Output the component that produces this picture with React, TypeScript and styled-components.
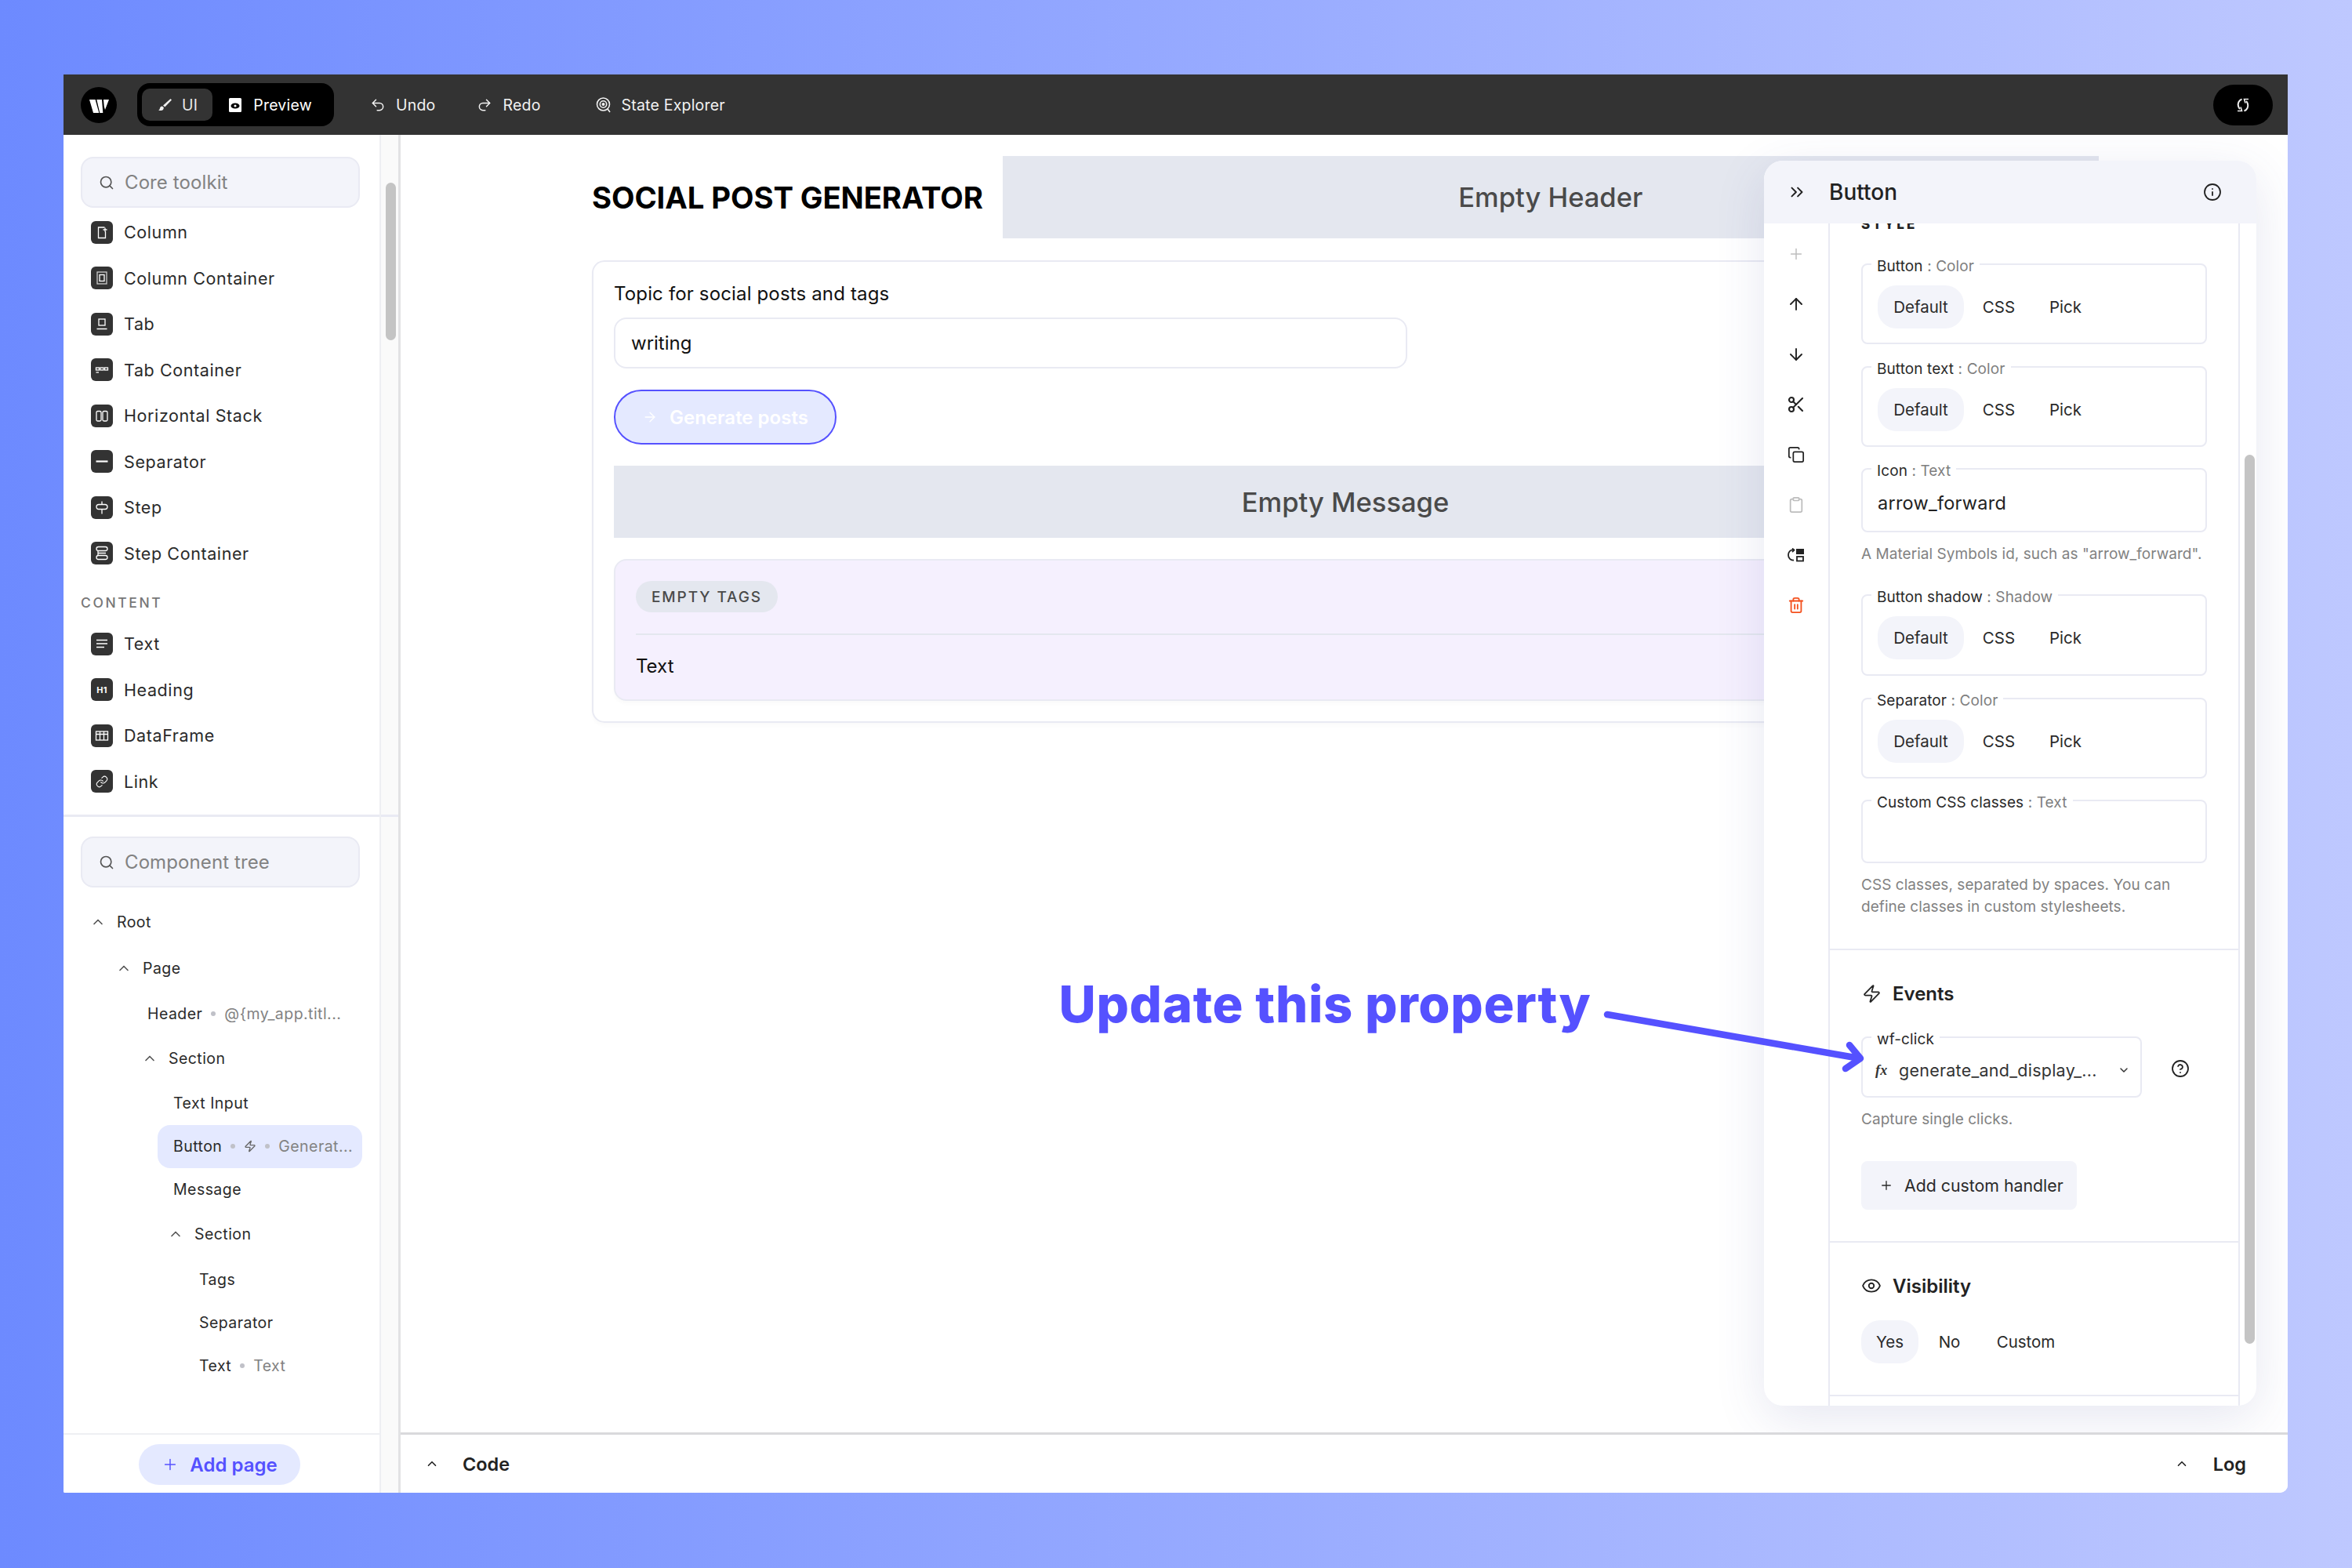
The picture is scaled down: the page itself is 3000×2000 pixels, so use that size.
import React from "react";
import styled, { createGlobalStyle } from "styled-components";
import {
  ArrowDown, ArrowRight, ArrowUp, ChevronDown, ChevronUp, ChevronsRight, CircleHelp, Clipboard, Copy,
  Eye, Info, Link, Plus, Redo2, Scissors, Search, Trash2, Undo2, Zap,
} from "lucide-react";

const FONT = `Inter, "Liberation Sans", sans-serif`;

const Global = createGlobalStyle`
  html, body { margin: 0; padding: 0; width: 3000px; height: 2000px; overflow: hidden; }
  body { font-family: ${FONT}; color: #222; background: linear-gradient(90deg, #6d8aff 0%, #bec8ff 100%); }
  * { box-sizing: border-box; }
`;

const Stage = styled.div`
  width: 3000px; height: 2000px; padding: 95px 82px 96px 81px;
`;
const Window = styled.div`
  width: 100%; height: 100%; display: flex; flex-direction: column; background: #fff;
  border-radius: 0 0 10px 2px; overflow: hidden;
`;

/* toolbar */
const Toolbar = styled.header`
  flex: 0 0 77px; background: #333; display: flex; align-items: center; padding: 0 19px 0 22px; color: #fff;
  font-size: 19.5px; letter-spacing: .2px;
`;
const Logo = styled.svg` width: 46px; height: 46px; flex: none; `;
const ModeSwitch = styled.div`
  margin-left: 26px; width: 251px; height: 55px; background: #000; border-radius: 16px; padding: 7px 6px;
  display: flex; align-items: center;
`;
const ModeBtn = styled.div<{ $on?: boolean }>`
  height: 41px; width: ${p => (p.$on ? 91 : 150)}px; border-radius: 10px; background: ${p => (p.$on ? "#333" : "transparent")};
  display: flex; align-items: center; gap: ${p => (p.$on ? 12 : 14)}px; padding-left: ${p => (p.$on ? 19 : 20)}px;
  color: ${p => (p.$on ? "#e8e8e8" : "#fff")};
`;
const ToolItem = styled.div<{ $ml: number }>`
  margin-left: ${p => p.$ml}px; display: flex; align-items: center; gap: 13px; color: #f2f2f2;
`;
const Grow = styled.div` flex: 1; `;
const SyncBtn = styled.div`
  width: 76px; height: 52px; border-radius: 26px; background: #000; display: flex; align-items: center; justify-content: center;
`;

/* body */
const Body = styled.div` flex: 1; display: flex; min-height: 0; `;
const Side = styled.aside`
  flex: 0 0 405px; width: 405px; min-width: 0; display: flex; flex-direction: column; background: #fff; border-right: 2px solid #eeeff3;
`;
const Rail = styled.div`
  flex: 0 0 25px; background: #fafafa; border-right: 3px solid #e2e2e4; padding: 61px 3px 0 6px;
`;
const RailThumb = styled.div` width: 13px; height: 201px; border-radius: 7px; background: #c4c4c4; `;
const RailRule = styled.div` margin: 605px -3px 0 -6px; height: 3px; background: #e9eaf3; `;
const Toolkit = styled.div`
  flex: 0 0 870px; padding: 28px 0 0 22px; border-bottom: 3px solid #e9eaf3;
`;
const SearchBox = styled.div`
  width: 356px; height: 65px; border-radius: 16px; background: #f3f4fa; border: 2.5px solid #e9eaf3;
  display: flex; align-items: center; gap: 13px; padding-left: 21px; color: #828282; font-size: 24px;
  letter-spacing: .1px;
`;
const ItemList = styled.div` margin-top: 2px; `;
const Item = styled.div`
  height: 58.5px; display: flex; align-items: center; gap: 14px; padding-left: 13px; font-size: 21.5px; color: #2a2a2a; letter-spacing: .6px;
`;
const Tile = styled.span`
  width: 28px; height: 29px; flex: none; border-radius: 6px; background: #333; display: inline-flex; align-items: center;
  justify-content: center; color: #fff; font-size: 11px; font-weight: 700; letter-spacing: .3px;
`;
const GroupLabel = styled.div`
  margin-top: 11px; height: 46px; line-height: 46px; font-size: 17.5px; font-weight: 500; letter-spacing: 2.6px; color: #777;
`;
const Tree = styled.div` flex: 1; padding: 25px 0 0 22px; display: flex; flex-direction: column; min-height: 0; `;
const TreeRows = styled.div` margin: 14px 0 0 -22px; width: 381px; `;
const Branch = styled.div<{ $level: number }>`
  height: 59.5px; display: flex; align-items: center; gap: 14px; font-size: 19.5px; color: #2a2a2a; letter-spacing: .45px;
  margin-left: ${p => 34 + p.$level * 33}px;
`;
const Leaf = styled.div<{ $level: number; $active?: boolean }>`
  height: 55px; display: flex; align-items: center; gap: 9px; font-size: 19.5px; color: #2a2a2a; letter-spacing: .45px;
  margin-left: ${p => 21 + p.$level * 33}px; padding-left: 20px; border-radius: 16px; white-space: nowrap; overflow: hidden;
  background: ${p => (p.$active ? "#e4e9ff" : "transparent")};
`;
const Dot = styled.i` width: 6px; height: 6px; border-radius: 50%; background: #c0c1c8; flex: none; margin: 0 2px; `;
const Secondary = styled.span` color: #828282; `;
const AddBar = styled.div`
  flex: 0 0 76px; border-top: 2px solid #eeeff3; display: flex; justify-content: center; padding: 12px 5px 0 0;
`;
const AddPage = styled.div`
  width: 206px; height: 52px; border-radius: 26px; background: #e4e9ff; color: #5551ff; font-weight: 600; font-size: 24px;
  display: flex; align-items: center; justify-content: center; gap: 14px;
`;

/* canvas */
const Main = styled.main` flex: 1; display: flex; flex-direction: column; min-width: 0; `;
const Canvas = styled.div` flex: 1; position: relative; overflow: hidden; padding: 27px 241px 0 244px; min-height: 0; `;
const HeaderRow = styled.div` display: flex; height: 105px; `;
const Title = styled.h1`
  margin: 0; flex: 0 0 523.5px; font-size: 38.3px; font-weight: 700; color: #000; display: flex; align-items: center; white-space: nowrap; letter-spacing: -.1px;
`;
const EmptyBlock = styled.div<{ $h: number }>`
  height: ${p => p.$h}px; flex: 1; background: #e4e7ef; color: #4a4a4a; display: flex; align-items: center; justify-content: center; font-size: 34.5px; font-weight: 500;
`;
const Card = styled.section`
  margin-top: 28px; height: 590px; border: 2px solid #e9eaf3; border-radius: 16px; padding: 27px 26px 0 26px; box-shadow: 0 4px 4px rgba(0,0,0,.02);
`;
const FieldLabel = styled.div` height: 28px; line-height: 28px; font-size: 24px; color: #111; letter-spacing: .15px; `;
const TextBox = styled.div`
  margin-top: 16px; width: 1012px; height: 65px; border: 2px solid #e9eaf3; border-radius: 16px; padding-left: 20px; display: flex; align-items: center;
  font-size: 24px; color: #111;
`;
const GenBtn = styled.div`
  margin-top: 27px; width: 284px; height: 70px; border-radius: 35px; border: 2px solid #5551ff; background: #e4e9ff; color: #fff; font-size: 24px; font-weight: 600;
  display: flex; align-items: center; gap: 15px; padding-left: 34px;
`;
const MessageWrap = styled.div` margin-top: 27px; display: flex; `;
const Purple = styled.div`
  margin-top: 27px; height: 181px; background: #f5f0fe; border: 2px solid #e9eaf3; border-radius: 16px; padding: 26px 26px 0; box-shadow: 0 4px 4px rgba(0,0,0,.02);
`;
const Tag = styled.div`
  display: inline-flex; align-items: center; height: 40px; width: 181px; justify-content: center; border-radius: 20px; background: #e4e7ef; color: #4a4a4a;
  font-size: 19px; font-weight: 500; letter-spacing: 1.9px; white-space: nowrap;
`;
const Rule = styled.div` margin-top: 27px; height: 2px; background: #e4e7ef; `;
const PurpleText = styled.div` margin-top: 26px; font-size: 24px; color: #111; line-height: 28px; `;

/* annotation */
const Callout = styled.div`
  position: absolute; left: 839.5px; top: 1070px; font-size: 65px; line-height: 78px; font-weight: 800; color: #5551ff; white-space: nowrap; letter-spacing: .7px; z-index: 5;
`;
const CalloutArrow = styled.svg` position: absolute; left: 1530px; top: 1115px; width: 340px; height: 80px; z-index: 5; overflow: visible; `;

/* props panel */
const Panel = styled.aside`
  position: absolute; left: 1739px; top: 33px; width: 628px; height: 1588px; border-radius: 24px; background: #fff; overflow: hidden;
  display: flex; flex-direction: column; box-shadow: 0 16px 64px rgba(60, 70, 150, .13); z-index: 3;
`;
const PanelHead = styled.div`
  flex: 0 0 80px; background: #f3f4fa; display: flex; align-items: center; padding: 0 44px 0 29px; gap: 28px; z-index: 1;
`;
const PanelTitle = styled.div` font-size: 28px; font-weight: 500; color: #222; flex: 1; `;
const PanelBody = styled.div` flex: 1; display: flex; min-height: 0; `;
const Tools = styled.div`
  flex: 0 0 84px; display: flex; flex-direction: column; align-items: center; padding: 7px 0 0 0; border-right: 2px solid #e9eaf3;
`;
const ToolBtn = styled.div<{ $color?: string }>`
  width: 40px; height: 64px; flex: none; display: flex; align-items: center; justify-content: center; color: ${p => p.$color || "#222"};
`;
const PanelMain = styled.div` flex: 0 0 523px; border-right: 2px solid #e9eaf3; overflow: hidden; `;
const PanelRail = styled.div` flex: 1; padding: 295px 4px 0 6px; `;
const PanelThumb = styled.div` width: 13px; height: 1134px; border-radius: 7px; background: #c4c4c4; `;
const Group = styled.section<{ $pt?: number; $pb: number }>`
  padding: ${p => p.$pt ?? 0}px 40px ${p => p.$pb}px 40px; border-bottom: 2px solid #e9eaf3;
`;
const StyleHead = styled.div` margin-top: -9px; height: 20px; line-height: 20px; font-size: 17px; font-weight: 800; letter-spacing: 3.2px; color: #222; `;
const Fld = styled.div<{ $mt: number; $h: number; $w?: number }>`
  position: relative; margin-top: ${p => p.$mt}px; height: ${p => p.$h}px; width: ${p => p.$w ?? 441}px; border: 2px solid #e9eaf3; border-radius: 8px;
`;
const Legend = styled.div`
  position: absolute; top: -10px; left: 11px; padding: 0 7px; height: 24px; line-height: 24px; background: #fff; font-size: 19px; color: #2a2a2a; white-space: nowrap; letter-spacing: .1px;
`;
const LegendType = styled.span` color: #7f7f7f; `;
const Pills = styled.div<{ $mt?: number; $ml?: number }>`
  display: flex; align-items: center; height: 55px; margin: ${p => p.$mt ?? 0}px 0 0 ${p => p.$ml ?? 0}px; font-size: 20.5px; color: #2a2a2a;
`;
const Pill = styled.div<{ $on?: boolean; $w: number }>`
  width: ${p => p.$w}px; height: 55px; border-radius: 24px; background: ${p => (p.$on ? "#f3f4fa" : "transparent")};
  display: flex; align-items: center; justify-content: center;
`;
const PlainValue = styled.div` padding: 6px 0 0 19px; height: 100%; display: flex; align-items: center; font-size: 23.5px; color: #222; letter-spacing: .25px; `;
const Help = styled.div<{ $mt: number }>` margin-top: ${p => p.$mt}px; font-size: 19px; line-height: 28.6px; color: #828282; letter-spacing: .05px; `;
const GroupHead = styled.div` display: flex; align-items: center; gap: 14px; height: 30px; font-size: 24px; font-weight: 600; color: #222; `;
const HeadIcon = styled.span` width: 26px; display: flex; justify-content: center; `;
const HandlerRow = styled.div` display: flex; align-items: flex-end; gap: 37px; `;
const HandlerInner = styled.div` height: 100%; display: flex; align-items: center; padding: 9px 0 0 16px; font-size: 21.5px; color: #333; letter-spacing: .25px; white-space: nowrap; `;
const Fx = styled.span` font-family: "Liberation Serif", serif; font-style: italic; font-weight: 700; font-size: 18px; width: 30px; flex: none; color: #333; `;
const HandlerText = styled.span` flex: none; width: 279px; `;
const HelpBtn = styled.span` color: #222; display: flex; margin-bottom: 25px; `;
const AddHandler = styled.div`
  margin-top: 39px; width: 275px; height: 62px; background: #f3f4fa; border-radius: 8px; display: flex; align-items: center; gap: 14px; padding-left: 23px; font-size: 21.3px; color: #2a2a2a;
`;

/* bottom */
const BottomBar = styled.footer`
  flex: 0 0 77px; border-top: 3px solid #d9d9dc; display: flex; align-items: center; padding: 0 53px 0 31px; font-size: 23.5px; font-weight: 600; color: #222; background: #fff;
`;
const BottomLabel = styled.div<{ $gap: number }>` display: flex; align-items: center; gap: ${p => p.$gap}px; `;

const s = { fill: "none", stroke: "#fff", strokeWidth: 1.3 } as const;
const TileSvg = ({ children }: { children: React.ReactNode }) => (
  <svg width="28" height="29" viewBox="0 0 28 29" {...s}>{children}</svg>
);
const coreIcons: [string, React.ReactNode][] = [
  ["Column", <TileSvg><path d="M17.5 8H9.5v13.5h9V13" /><path d="M18 8.5v5M15.5 11h5" /></TileSvg>],
  ["Column Container", <TileSvg><rect x="8" y="7" width="12" height="15" stroke="#ccc" /><rect x="11" y="10.5" width="6" height="8" /></TileSvg>],
  ["Tab", <TileSvg><rect x="10" y="8" width="8" height="8" /><path d="M7.5 20.5h13" strokeWidth="1.5" /></TileSvg>],
  ["Tab Container", <TileSvg><rect x="6.5" y="12" width="4" height="3" /><rect x="12" y="12" width="4" height="3" /><rect x="17.5" y="12" width="4" height="3" /><path d="M6.5 18h3.5" /></TileSvg>],
  ["Horizontal Stack", <TileSvg><rect x="7" y="8.5" width="6" height="12.5" rx="1.5" /><rect x="15" y="8.5" width="6" height="12.5" rx="1.5" /></TileSvg>],
  ["Separator", <TileSvg><path d="M6.5 14.5h15" strokeWidth="2.2" /></TileSvg>],
  ["Step", <TileSvg><rect x="7" y="10.5" width="14" height="6" rx="3" /><path d="M14 6.5v4M14 16.5v6" /></TileSvg>],
  ["Step Container", <TileSvg><rect x="7" y="6.5" width="14" height="5" rx="2.5" /><rect x="7" y="17.5" width="14" height="5" rx="2.5" /><path d="M9 11.5v6M9 14.5h10" /></TileSvg>],
];
const contentIcons: [string, React.ReactNode][] = [
  ["Text", <TileSvg><path d="M7 9.5h14M7 14h14M7 18.5h10" /></TileSvg>],
  ["Heading", <>H1</>],
  ["DataFrame", <TileSvg><rect x="6.5" y="9" width="15" height="11" /><path d="M6.5 12.5h15M11.5 9v11M16.5 9v11" /></TileSvg>],
  ["Link", <Link size={16} strokeWidth={1.6} />],
];

const StylePills = () => (
  <Pills $mt={26} $ml={19}>
    <Pill $on $w={110}>Default</Pill>
    <Pill $w={89}>CSS</Pill>
    <Pill $w={81}>Pick</Pill>
  </Pills>
);

export default function App() {
  return (
    <Stage>
      <Global />
      <Window>
        <Toolbar>
          <Logo viewBox="0 0 46 46">
            <circle cx="23" cy="23" r="23" fill="#000" />
            <path fill="#fff" d="M11 16h7.6l4.7 17H16zM20.3 16H27l1.3 17h-4zM29 16h7l-5 13-1.2-4z" />
          </Logo>
          <ModeSwitch>
            <ModeBtn $on>
              <svg width="20" height="20" viewBox="0 0 20 20" fill="#eee"><path d="M17.5 2 19 3.4 10.3 12.6 8 10.6z" /><path d="M7 11.6c-2.2.2-3 1.6-3.2 3-.1 1-.7 1.5-1.6 1.8 1.5 1 4.4 1 5.7-.4.9-1 1-2.2.9-2.9z" /></svg>
              UI
            </ModeBtn>
            <ModeBtn>
              <svg width="18" height="20" viewBox="0 0 18 20"><rect x="1" y="1" width="16" height="18" rx="1.5" fill="#fff" /><ellipse cx="9" cy="11" rx="5.5" ry="3.6" fill="#000" /><circle cx="9" cy="11" r="1.6" fill="#fff" /></svg>
              Preview
            </ModeBtn>
          </ModeSwitch>
          <ToolItem $ml={46}><Undo2 size={20} strokeWidth={1.8} />Undo</ToolItem>
          <ToolItem $ml={53}><Redo2 size={20} strokeWidth={1.8} />Redo</ToolItem>
          <ToolItem $ml={70}>
            <svg width="20" height="22" viewBox="0 0 20 22" fill="none" stroke="#f2f2f2" strokeWidth="1.6"><circle cx="9.5" cy="10" r="8" /><circle cx="9.5" cy="10" r="4.2" /><circle cx="9.5" cy="10" r="1.2" fill="#f2f2f2" /><path d="m15 16 3 4" /></svg>
            State Explorer
          </ToolItem>
          <Grow />
          <SyncBtn>
            <svg width="20" height="20" viewBox="0 0 20 20" fill="none" stroke="#eee" strokeWidth="2"><path d="M8.5 2.5C4.5 4 3 8 4 11.5c.4 1.3 1 2.5 2 3.5" /><path d="M3 17.5h5.5L7 12.5" strokeWidth="1.6" /><path d="M11.5 17.5c4-1.5 5.5-5.5 4.5-9-.4-1.3-1-2.5-2-3.5" /><path d="M17 2.5h-5.5l1.5 5" strokeWidth="1.6" /></svg>
          </SyncBtn>
        </Toolbar>
        <Body>
          <Side>
            <Toolkit>
              <SearchBox><Search size={20} strokeWidth={2} color="#555" />Core toolkit</SearchBox>
              <ItemList>
                {coreIcons.map(([n, ic]) => <Item key={n}><Tile>{ic}</Tile>{n}</Item>)}
                <GroupLabel>CONTENT</GroupLabel>
                {contentIcons.map(([n, ic]) => <Item key={n}><Tile>{ic}</Tile>{n}</Item>)}
              </ItemList>
            </Toolkit>
            <Tree>
              <SearchBox><Search size={20} strokeWidth={2} color="#555" />Component tree</SearchBox>
              <TreeRows>
                <Branch $level={0}><ChevronUp size={20} color="#555" />Root</Branch>
                <Branch $level={1}><ChevronUp size={20} color="#555" />Page</Branch>
                <Leaf $level={2}>Header<Dot /><Secondary>@&#123;my_app.titl...</Secondary></Leaf>
                <Branch $level={2}><ChevronUp size={20} color="#555" />Section</Branch>
                <Leaf $level={3}>Text Input</Leaf>
                <Leaf $level={3} $active>Button<Dot /><Zap size={16} color="#666" strokeWidth={2} /><Dot /><Secondary>Generat...</Secondary></Leaf>
                <Leaf $level={3}>Message</Leaf>
                <Branch $level={3}><ChevronUp size={20} color="#555" />Section</Branch>
                <Leaf $level={4}>Tags</Leaf>
                <Leaf $level={4}>Separator</Leaf>
                <Leaf $level={4}>Text<Dot /><Secondary>Text</Secondary></Leaf>
              </TreeRows>
            </Tree>
            <AddBar><AddPage><Plus size={22} strokeWidth={1.6} />Add page</AddPage></AddBar>
          </Side>
          <Rail><RailThumb /><RailRule /></Rail>
          <Main>
            <Canvas>
              <HeaderRow>
                <Title>SOCIAL POST GENERATOR</Title>
                <EmptyBlock $h={105}>Empty Header</EmptyBlock>
              </HeaderRow>
              <Card>
                <FieldLabel>Topic for social posts and tags</FieldLabel>
                <TextBox>writing</TextBox>
                <GenBtn><ArrowRight size={20} strokeWidth={1.6} />Generate posts</GenBtn>
                <MessageWrap><EmptyBlock $h={92}>Empty Message</EmptyBlock></MessageWrap>
                <Purple>
                  <Tag>EMPTY TAGS</Tag>
                  <Rule />
                  <PurpleText>Text</PurpleText>
                </Purple>
              </Card>
              <Panel>
                <PanelHead>
                  <ChevronsRight size={26} strokeWidth={1.8} color="#222" />
                  <PanelTitle>Button</PanelTitle>
                  <Info size={24} strokeWidth={1.8} color="#222" />
                </PanelHead>
                <PanelBody>
                  <Tools>
                    <ToolBtn $color="#bdbdbd"><Plus size={22} strokeWidth={1.6} /></ToolBtn>
                    <ToolBtn><ArrowUp size={24} strokeWidth={1.9} /></ToolBtn>
                    <ToolBtn><ArrowDown size={24} strokeWidth={1.9} /></ToolBtn>
                    <ToolBtn><Scissors size={24} strokeWidth={2.1} /></ToolBtn>
                    <ToolBtn><Copy size={22} strokeWidth={1.9} /></ToolBtn>
                    <ToolBtn $color="#bdbdbd"><Clipboard size={22} strokeWidth={1.9} /></ToolBtn>
                    <ToolBtn>
                      <svg width="22" height="18" viewBox="0 0 22 18" fill="none" stroke="#222" strokeWidth="1.8"><path d="M8 2.5C3.5 2 1 5 1 9s3 7 7 6.5" /><path d="M6 .5 8.5 2.5 6 5" /><rect x="11" y="1" width="10" height="7" fill="#222" stroke="none" /><rect x="12" y="11" width="8" height="5.5" /></svg>
                    </ToolBtn>
                    <ToolBtn $color="#f4511e"><Trash2 size={22} strokeWidth={2} /></ToolBtn>
                  </Tools>
                  <PanelMain>
                    <Group $pb={38}>
                      <StyleHead>STYLE</StyleHead>
                      <Fld $mt={40} $h={103}>
                        <Legend>Button <LegendType>: Color</LegendType></Legend>
                        <StylePills />
                      </Fld>
                      <Fld $mt={28} $h={103}>
                        <Legend>Button text <LegendType>: Color</LegendType></Legend>
                        <StylePills />
                      </Fld>
                      <Fld $mt={27} $h={82}>
                        <Legend>Icon <LegendType>: Text</LegendType></Legend>
                        <PlainValue>arrow_forward</PlainValue>
                      </Fld>
                      <Help $mt={14}>A Material Symbols id, such as "arrow_forward".</Help>
                      <Fld $mt={36} $h={104}>
                        <Legend>Button shadow <LegendType>: Shadow</LegendType></Legend>
                        <StylePills />
                      </Fld>
                      <Fld $mt={28} $h={103}>
                        <Legend>Separator <LegendType>: Color</LegendType></Legend>
                        <StylePills />
                      </Fld>
                      <Fld $mt={27} $h={81}>
                        <Legend>Custom CSS classes <LegendType>: Text</LegendType></Legend>
                      </Fld>
                      <Help $mt={14}>CSS classes, separated by spaces. You can define classes in custom stylesheets.</Help>
                    </Group>
                    <Group $pt={41} $pb={40}>
                      <GroupHead><HeadIcon><Zap size={25} strokeWidth={1.7} /></HeadIcon>Events</GroupHead>
                      <HandlerRow>
                        <Fld $mt={39} $h={78} $w={358}>
                          <Legend>wf-click</Legend>
                          <HandlerInner><Fx>fx</Fx><HandlerText>generate_and_display_...</HandlerText><ChevronDown size={16} strokeWidth={2.2} /></HandlerInner>
                        </Fld>
                        <HelpBtn><CircleHelp size={24} strokeWidth={1.8} /></HelpBtn>
                      </HandlerRow>
                      <Help $mt={14}>Capture single clicks.</Help>
                      <AddHandler><Plus size={18} strokeWidth={1.8} />Add custom handler</AddHandler>
                    </Group>
                    <Group $pt={40} $pb={40}>
                      <GroupHead><HeadIcon><Eye size={28} strokeWidth={1.7} /></HeadIcon>Visibility</GroupHead>
                      <Pills $mt={29}><Pill $on $w={73}>Yes</Pill><Pill $w={79}>No</Pill><Pill $w={116}>Custom</Pill></Pills>
                    </Group>
                  </PanelMain>
                  <PanelRail><PanelThumb /></PanelRail>
                </PanelBody>
              </Panel>
              <Callout>Update this property</Callout>
              <CalloutArrow viewBox="0 0 340 80">
                <path d="M9 7 331 63M318 46 332 63 313 76" fill="none" stroke="#5551ff" strokeWidth="8.5" strokeLinecap="round" strokeLinejoin="round" />
              </CalloutArrow>
            </Canvas>
            <BottomBar>
              <BottomLabel $gap={30}><ChevronUp size={18} strokeWidth={2.2} />Code</BottomLabel>
              <Grow />
              <BottomLabel $gap={31}><ChevronUp size={18} strokeWidth={2.2} />Log</BottomLabel>
            </BottomBar>
          </Main>
        </Body>
      </Window>
    </Stage>
  );
}
